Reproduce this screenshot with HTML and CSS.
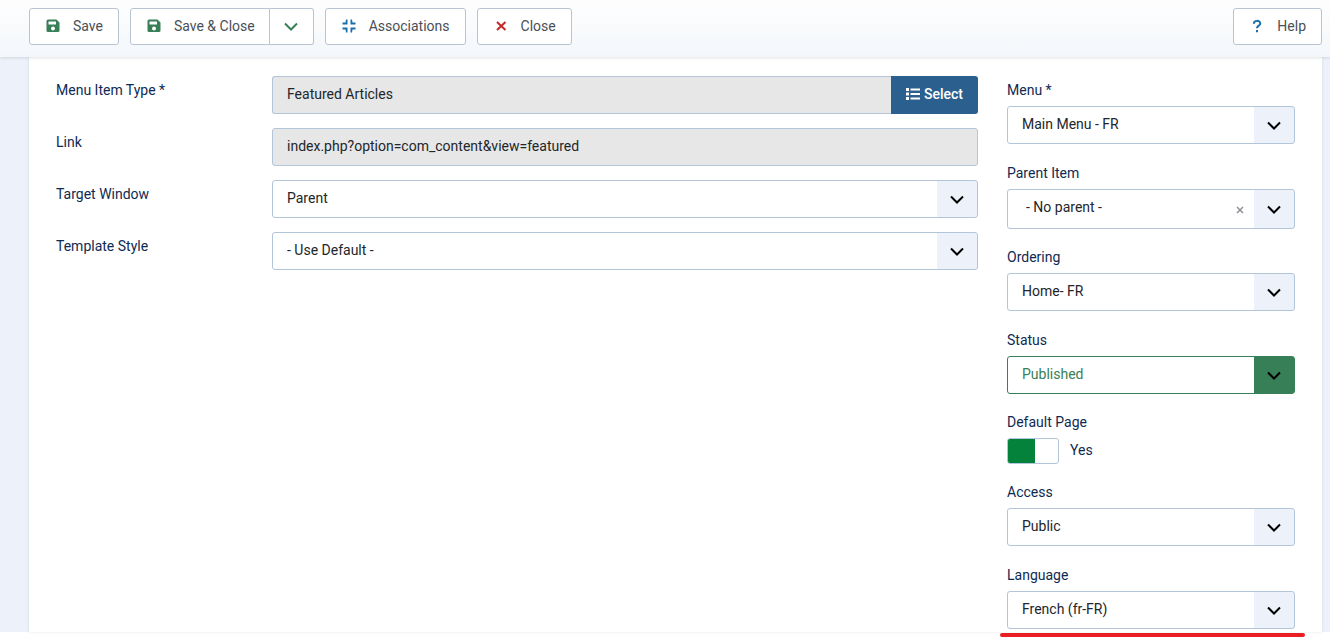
FILE: index.html
```html
<!DOCTYPE html>
<html lang="en">
<head>
    <meta charset="UTF-8">
    <meta name="viewport" content="width=device-width, initial-scale=1.0">
    <title>Menus: Edit Item</title>
    <link rel="stylesheet" href="styles.css">
</head>
<body>
    <!-- Toolbar -->
    <header class="toolbar">
        <button type="button" class="btn">
            <svg class="icon icon-success" viewBox="0 0 16 16"><path fill-rule="evenodd" d="M3 1.500H11.500L14.500 4.500V12.500A1.500 1.500 0 0 1 13 14H3A1.500 1.500 0 0 1 1.500 12.500V3A1.500 1.500 0 0 1 3 1.500ZM3.500 3.500V6.500H11V3.500ZM8 8.500A2 2 0 1 0 8 12.500A2 2 0 1 0 8 8.500Z"/></svg>
            Save
        </button>
        <div class="btn-group">
            <button type="button" class="btn">
                <svg class="icon icon-success" viewBox="0 0 16 16"><path fill-rule="evenodd" d="M3 1.500H11.500L14.500 4.500V12.500A1.500 1.500 0 0 1 13 14H3A1.500 1.500 0 0 1 1.500 12.500V3A1.500 1.500 0 0 1 3 1.500ZM3.500 3.500V6.500H11V3.500ZM8 8.500A2 2 0 1 0 8 12.500A2 2 0 1 0 8 8.500Z"/></svg>
                Save &amp; Close
            </button>
            <button type="button" class="btn btn-toggle" aria-label="More save options">
                <svg class="caret" viewBox="0 0 14 14"><path d="M1 3.500L7 9.500L13 3.500"/></svg>
            </button>
        </div>
        <button type="button" class="btn">
            <svg class="icon icon-info" viewBox="0 0 16 16"><path d="M5 1.500H6.500V6.500H1.500V4.500H4.500ZM9.500 1.500H11L11.500 4.500H14.500V6.500H9.500ZM1.500 9.500H6.500V14.500H5L4.500 11.500H1.500ZM9.500 9.500H14.500V11.500H11.500L11 14.500H9.500Z"/></svg>
            Associations
        </button>
        <button type="button" class="btn">
            <svg class="icon icon-danger" viewBox="0 0 16 16"><path d="M4 4L12.500 12M12.500 4L4 12"/></svg>
            Close
        </button>
        <button type="button" class="btn btn-help">
            <svg class="icon icon-help" viewBox="0 0 16 16"><path d="M4.800 5.800C4.800 1.900 11.300 2 11.300 5.500C11.300 7.800 8 7.600 8 10.300M8 12V14.200"/></svg>
            Help
        </button>
    </header>

    <main class="content">
        <form class="panel">
            <div class="main-fields">
                <div class="control-group">
                    <label for="item-type">Menu Item Type *</label>
                    <div class="input-group">
                        <input type="text" id="item-type" class="form-control" value="Featured Articles" readonly>
                        <button type="button" class="btn-select">
                            <svg class="list-icon" viewBox="0 0 14 14"><path d="M0 1H3V4H0ZM0 5.500H3V8.500H0ZM0 10H3V13H0ZM4.500 1.500H14V3.500H4.500ZM4.500 6H14V8H4.500ZM4.500 10.500H14V12.500H4.500Z"/></svg>
                            Select
                        </button>
                    </div>
                </div>
                <div class="control-group">
                    <label for="link">Link</label>
                    <input type="text" id="link" class="form-control" value="index.php?option=com_content&amp;view=featured" readonly>
                </div>
                <div class="control-group">
                    <label for="target">Target Window</label>
                    <select id="target" class="form-select">
                        <option>Parent</option>
                        <option>New Window With Navigation</option>
                    </select>
                </div>
                <div class="control-group">
                    <label for="template">Template Style</label>
                    <select id="template" class="form-select">
                        <option>- Use Default -</option>
                    </select>
                </div>
            </div>

            <div class="side-fields">
                <div class="field">
                    <label for="menu">Menu *</label>
                    <select id="menu" class="form-select">
                        <option>Main Menu - FR</option>
                    </select>
                </div>
                <div class="field field-short">
                    <label for="parent">Parent Item</label>
                    <div class="choices">
                        <select id="parent" class="form-select">
                            <option>- No parent -</option>
                        </select>
                        <button type="button" class="choices-clear" aria-label="Remove item">
                            <svg viewBox="0 0 8 8"><path d="M1 1L7 7M7 1L1 7"/></svg>
                        </button>
                    </div>
                </div>
                <div class="field">
                    <label for="ordering">Ordering</label>
                    <select id="ordering" class="form-select">
                        <option>Home- FR</option>
                    </select>
                </div>
                <div class="field field-short">
                    <label for="status">Status</label>
                    <select id="status" class="form-select is-published">
                        <option>Published</option>
                        <option>Unpublished</option>
                    </select>
                </div>
                <div class="field field-short">
                    <label for="default-page">Default Page</label>
                    <div class="switch-row">
                        <input type="checkbox" id="default-page" class="switch" role="switch" checked>
                        <span>Yes</span>
                    </div>
                </div>
                <div class="field">
                    <label for="access">Access</label>
                    <select id="access" class="form-select">
                        <option>Public</option>
                    </select>
                </div>
                <div class="field field-marked">
                    <label for="language">Language</label>
                    <select id="language" class="form-select">
                        <option>French (fr-FR)</option>
                    </select>
                </div>
            </div>
        </form>
    </main>
</body>
</html>
```

FILE: styles.css
```css
:root {
    --text-color: #22262a;
    --label-color: #0f2a52;
    --border-color: #b3c5d9;
    --page-bg: #edf2fa;
    --success: #377f57;
    --info: #1a6fa8;
    --danger: #c52827;
    --primary: #2b5f8e;
}

* {
    box-sizing: border-box;
}

body {
    min-height: 100vh;
    margin: 0;
    background: #fff;
    color: var(--label-color);
    font-family: Roboto, sans-serif;
    font-size: 14px;
    line-height: 20px;
}

button, input, select {
    font: inherit;
}

/* Toolbar */
.toolbar {
    position: relative;
    z-index: 1;
    display: flex;
    gap: 11px;
    padding: 8px 8px 12px 29px;
    background: linear-gradient(#fefefe, #f3f7fb);
    box-shadow: 0 1px 3px rgba(0, 0, 0, 0.12);
}

.btn {
    display: flex;
    align-items: center;
    gap: 12px;
    height: 37px;
    padding: 0 15px 2px;
    border: 1px solid #b9c4d2;
    border-radius: 3px;
    background: #fff;
    color: #495057;
    cursor: pointer;
}

.btn-group {
    display: flex;
}

.btn-group .btn:first-child {
    padding-right: 14px;
    border-radius: 3px 0 0 3px;
}

.btn-group .btn-toggle {
    justify-content: center;
    width: 44px;
    padding: 0;
    border-left: 0;
    border-radius: 0 3px 3px 0;
}

.btn-help {
    margin-left: auto;
}

.icon {
    width: 16px;
    height: 16px;
}

.icon-success {
    fill: var(--success);
}

.icon-info {
    fill: var(--info);
}

.icon-danger,
.icon-help,
.caret {
    fill: none;
    stroke-width: 2;
}

.icon-danger {
    stroke: var(--danger);
}

.icon-help {
    stroke: var(--info);
}

.caret {
    width: 14px;
    height: 14px;
    stroke: var(--success);
}

/* Edit form */
.content {
    padding: 0 8px 0 29px;
    background: var(--page-bg);
}

.panel {
    display: grid;
    grid-template-columns: 1fr 288px;
    gap: 29px;
    padding: 19px 27px 3px;
    background: #fff;
    box-shadow: 0 0 3px rgba(20, 50, 100, 0.12);
}

.main-fields {
    display: flex;
    flex-direction: column;
    gap: 14px;
}

.control-group {
    display: grid;
    grid-template-columns: 216px 1fr;
}

.control-group label {
    padding-top: 4px;
}

.form-control,
.form-select {
    width: 100%;
    height: 38px;
    padding: 0 14px 2px;
    border: 1px solid var(--border-color);
    border-radius: 3px;
    color: var(--text-color);
}

.form-control {
    background: #e7e7e7;
}

.form-select {
    appearance: none;
    background:
        url("data:image/svg+xml,%3Csvg xmlns='http://www.w3.org/2000/svg' width='14' height='14' fill='none' stroke='%23000' stroke-width='2'%3E%3Cpath d='M1 4.500L7 10.500L13 4.500'/%3E%3C/svg%3E") no-repeat right 13px center,
        linear-gradient(var(--arrow-bg, var(--page-bg)) 0 0) no-repeat right / 40px 100%,
        #fff;
}

.is-published {
    --arrow-bg: var(--success);
    border-color: var(--success);
    color: var(--success);
}

.input-group {
    display: flex;
}

.input-group .form-control {
    flex: 1;
    border-right: 0;
    border-radius: 3px 0 0 3px;
}

.btn-select {
    display: flex;
    align-items: center;
    gap: 4px;
    padding: 0 15px 2px;
    border: 0;
    border-radius: 0 3px 3px 0;
    background: var(--primary);
    color: #fff;
    font-weight: 500;
    cursor: pointer;
}

.list-icon {
    width: 14px;
    height: 14px;
    fill: #fff;
}

/* Sidebar */
.side-fields {
    padding-top: 4px;
}

.field {
    display: flex;
    flex-direction: column;
    gap: 6px;
    margin-bottom: 19px;
}

.field-short {
    margin-bottom: 18px;
}

.choices {
    position: relative;
}

.choices .form-select {
    display: block;
    height: 40px;
    padding: 0 18px 4px;
}

.choices-clear {
    position: absolute;
    top: 17px;
    right: 51px;
    width: 8px;
    height: 8px;
    padding: 0;
    border: 0;
    background: none;
    cursor: pointer;
}

.choices-clear svg {
    display: block;
    fill: none;
    stroke: #8d9196;
    stroke-width: 1.5;
}

.switch-row {
    display: flex;
    gap: 11px;
    height: 26px;
}

.switch {
    appearance: none;
    width: 52px;
    height: 26px;
    margin: 0;
    border: 1px solid var(--border-color);
    border-radius: 3px;
    background: linear-gradient(#04813a 0 0) no-repeat left / 27px 100%;
}

.switch-row span {
    padding-top: 2px;
}

.field-marked {
    position: relative;
    margin-bottom: 0;
}

.field-marked::after {
    content: "";
    position: absolute;
    right: -10px;
    bottom: -8px;
    left: -7px;
    height: 4px;
    border-radius: 2px;
    background: #e81e22;
}
```
